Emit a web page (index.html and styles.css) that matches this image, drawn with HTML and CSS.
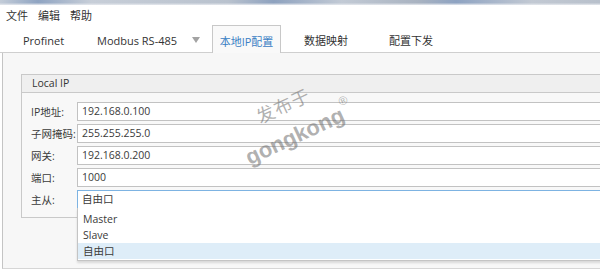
FILE: index.html
```html
<!DOCTYPE html>
<html lang="zh-CN">
<head>
<meta charset="utf-8">
<title>本地IP配置</title>
<link rel="stylesheet" href="styles.css">
</head>
<body>
<div class="page">
  <div class="strip"></div>
  <nav class="menubar"><span>文件</span><span>编辑</span><span>帮助</span></nav>
  <div class="tabs">
    <div class="tab t1">Profinet</div>
    <div class="tab t2">Modbus RS-485<span class="caret"></span></div>
    <div class="tab active">本地IP配置</div>
    <div class="tab t4">数据映射</div>
    <div class="tab t5">配置下发</div>
  </div>
  <main class="panel">
    <section class="group">
      <header class="group-head">Local IP</header>
      <div class="group-body">
        <div class="row"><label>IP地址:</label><div class="field">192.168.0.100</div></div>
        <div class="row"><label>子网掩码:</label><div class="field">255.255.255.0</div></div>
        <div class="row"><label>网关:</label><div class="field">192.168.0.200</div></div>
        <div class="row"><label>端口:</label><div class="field">1000</div></div>
        <div class="row"><label>主从:</label><div class="field focus">自由口
          <ul class="dropdown">
            <li>Master</li>
            <li>Slave</li>
            <li class="selected">自由口</li>
          </ul>
        </div></div>
      </div>
    </section>
  </main>
</div>
<div class="watermark">
  <div class="wm-cn">发布于</div>
  <div class="wm-en">gongkong<sup>®</sup></div>
</div>
</body>
</html>
```
FILE: styles.css
```css
html, body {
  margin: 0;
  padding: 0;
  background: #ffffff;
  overflow: hidden;
}
body {
  font-family: "Open Sans", "Noto Sans CJK SC", sans-serif;
  color: #333333;
  position: relative;
  width: 600px;
  height: 273px;
}
.page {
  width: 760px;
}
.strip {
  height: 5px;
  background:
    linear-gradient(180deg, rgba(255,255,255,0) 0%, rgba(255,255,255,0) 55%, #e6e9ee 100%),
    linear-gradient(90deg, #c3ccd8 0%, #8fa4c2 5%, #c7ced8 12%, #b9c2ce 30%, #8ea2bf 36%, #c2cad5 45%, #a9b3c1 55%, #8ea3c2 60%, #c2c9d3 70%, #b1bac6 85%, #8ea2c0 90%, #c0c8d2 100%);
}
.menubar {
  height: 20px;
  display: flex;
  align-items: center;
  gap: 10px;
  padding-left: 6px;
  font-size: 11px;
  line-height: 20px;
  padding-top: 2px;
  box-sizing: border-box;
}
.tabs {
  height: 28px;
  display: flex;
  align-items: stretch;
  padding-left: 13px;
  border-bottom: 1px solid #cfcfcf;
  box-sizing: border-box;
  font-size: 11px;
}
.tab {
  display: flex;
  align-items: center;
  padding-top: 3px;
  box-sizing: border-box;
  white-space: nowrap;
}
.t1 { width: 74px; padding-left: 10px; }
.t2 { width: 125px; padding-left: 10px; }
.caret {
  margin-left: auto;
  margin-right: 12px;
  width: 0;
  height: 0;
  border-left: 4px solid transparent;
  border-right: 4px solid transparent;
  border-top: 6px solid #a3a3a3;
  margin-top: -1px;
}
.active {
  width: 69px;
  justify-content: center;
  color: #3a80c4;
  background: #f9f9f9;
  border: 1px solid #c8c8c8;
  border-bottom: none;
  margin-bottom: -1px;
}
.t4 { width: 98px; padding-left: 23px; }
.t5 { width: 100px; padding-left: 10px; }
.panel {
  margin-left: 2px;
  height: 216px;
  border-left: 1px solid #c4c4c4;
  border-bottom: 1px solid #d6d6d6;
  background: #f7f7f7;
  box-sizing: border-box;
  padding-top: 21px;
}
.group {
  margin-left: 18px;
  border: 1px solid #c9c9c9;
  background: #f8f8f8;
}
.group-head {
  height: 18px;
  box-sizing: border-box;
  background: #efefef;
  border-bottom: 1px solid #c9c9c9;
  padding-left: 10px;
  font-size: 10.5px;
  line-height: 17px;
}
.group-body {
  padding: 9px 0 8px 9px;
  display: flex;
  flex-direction: column;
  gap: 3px;
}
.row {
  display: flex;
  align-items: center;
  height: 19px;
}
.row label {
  width: 46px;
  flex: none;
  font-size: 10.5px;
  white-space: nowrap;
  color: #3a3a3a;
}
.field {
  position: relative;
  flex: 1;
  height: 19px;
  box-sizing: border-box;
  border: 1px solid #c2c2c2;
  background: #ffffff;
  padding-left: 4px;
  font-size: 10.5px;
  line-height: 17px;
  color: #3a3a3a;
}
.field.focus {
  border-color: #7db3e2;
  border-bottom-color: #5f9dd2;
}
.dropdown {
  position: absolute;
  left: -1px;
  right: -1px;
  top: 100%;
  margin: 0;
  padding: 3px 0 1px 0;
  list-style: none;
  background: #ffffff;
  border: 1px solid #c4c4c4;
  border-top: none;
  box-shadow: 0 2px 2px rgba(0,0,0,0.12);
  z-index: 2;
}
.dropdown li {
  height: 16px;
  line-height: 16px;
  padding-left: 5px;
  font-size: 10.5px;
}
.dropdown li.selected {
  background: #deedf8;
}
.watermark {
  position: absolute;
  left: 251px;
  top: 116px;
  transform: rotate(-25deg);
  transform-origin: 0 100%;
  color: rgba(110,110,110,0.55);
  font-family: "Liberation Sans", "Noto Sans CJK SC", sans-serif;
  font-weight: bold;
  pointer-events: none;
  z-index: 5;
}
.wm-cn {
  font-size: 18px;
  line-height: 20px;
  padding-left: 27px;
  letter-spacing: 1px;
  font-weight: normal;
}
.wm-en {
  font-size: 22px;
  line-height: 20px;
}
.wm-en sup {
  font-size: 12px;
  font-weight: normal;
  vertical-align: 15px;
  margin-left: 1px;
}
```
